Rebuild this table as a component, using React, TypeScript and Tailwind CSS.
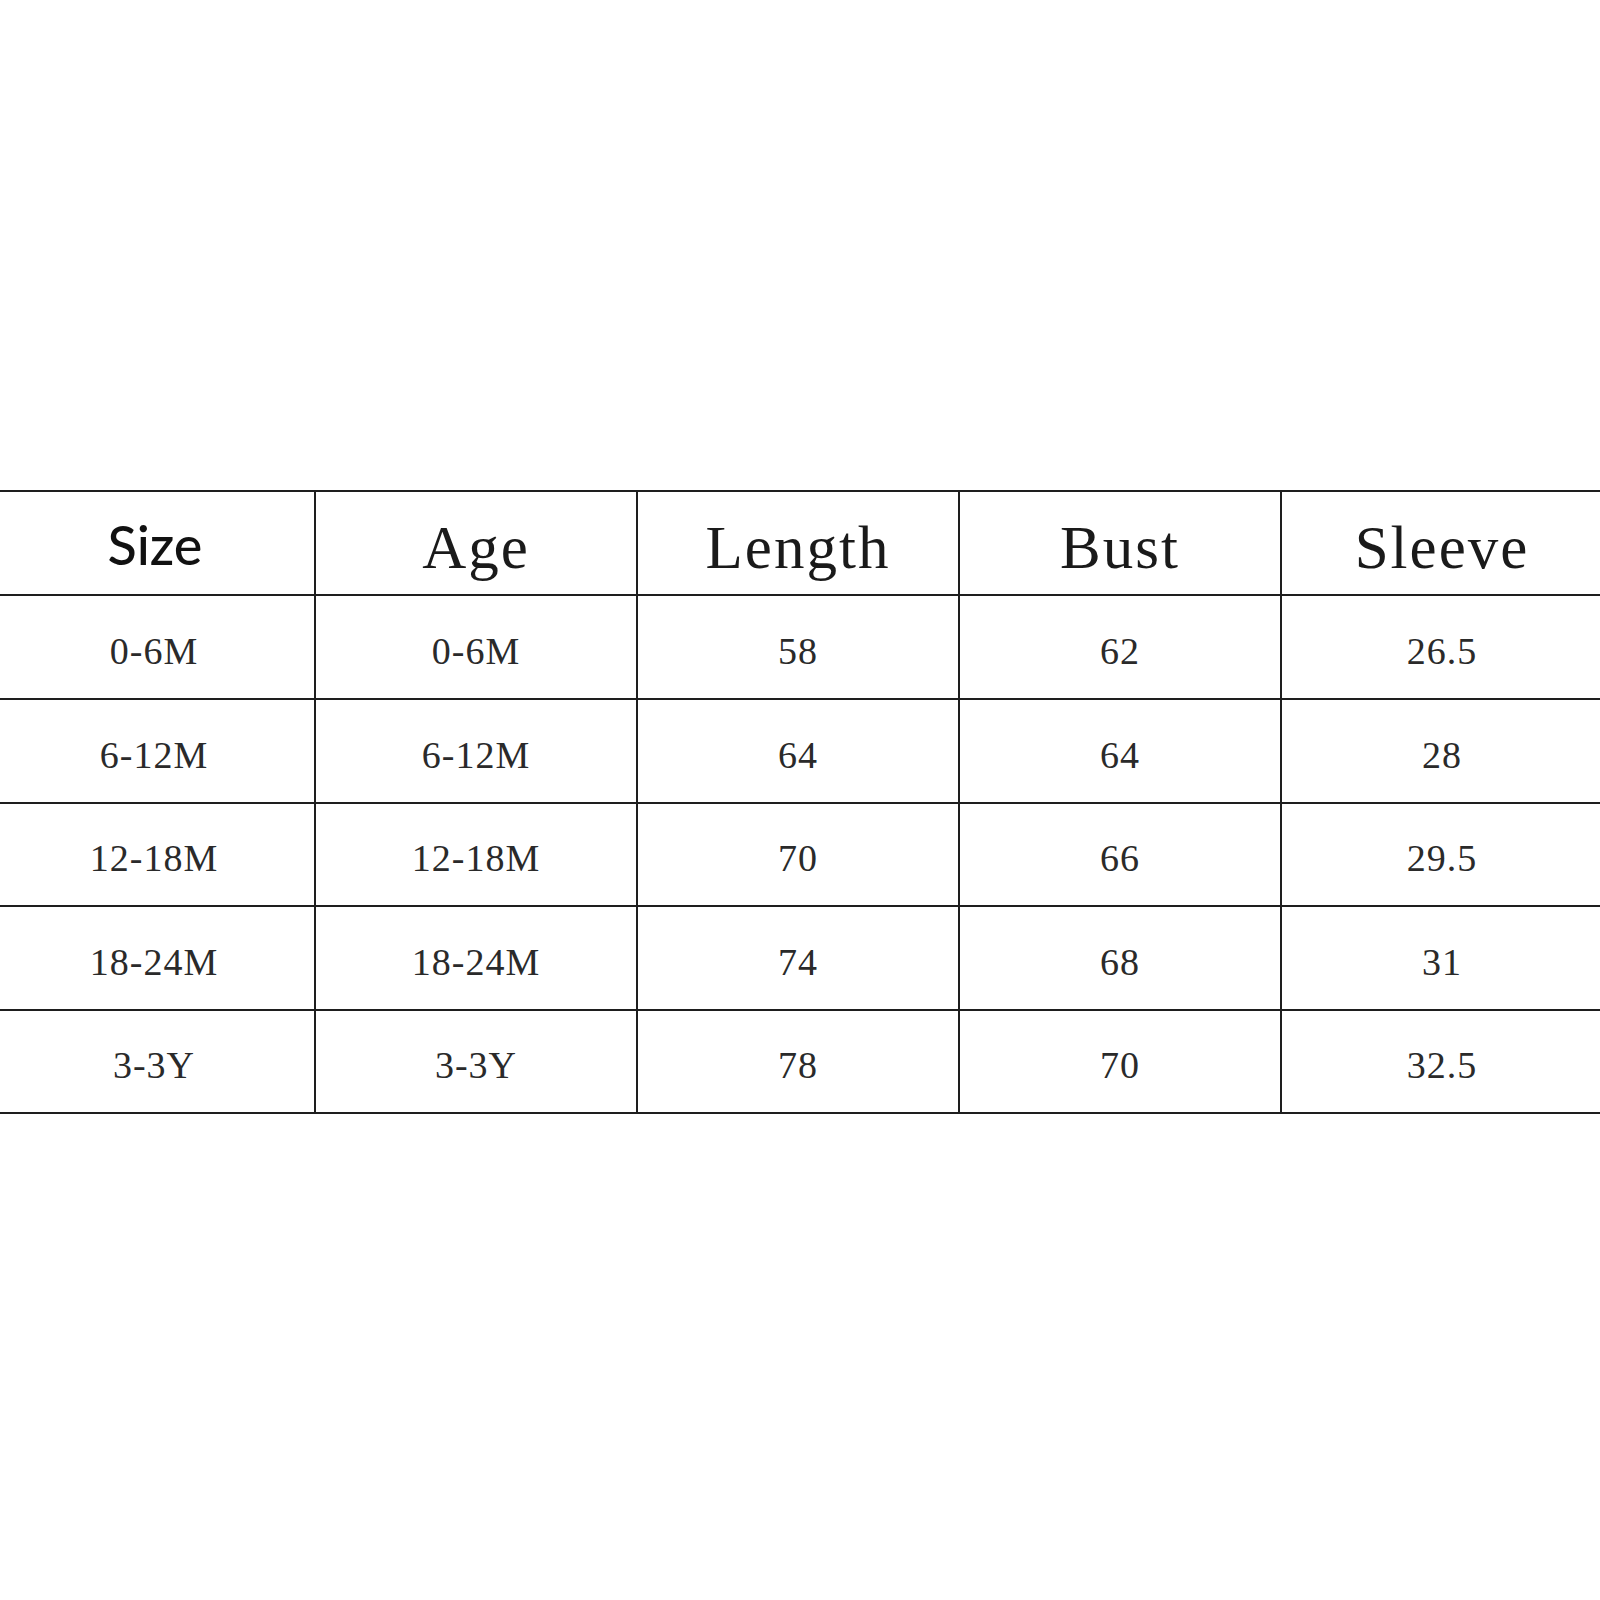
const headers = ["Size", "Age", "Length", "Bust", "Sleeve"];

const rows = [
  { h: "h-[104px]", cells: ["0-6M", "0-6M", "58", "62", "26.5"] },
  { h: "h-[104px]", cells: ["6-12M", "6-12M", "64", "64", "28"] },
  { h: "h-[103px]", cells: ["12-18M", "12-18M", "70", "66", "29.5"] },
  { h: "h-[104px]", cells: ["18-24M", "18-24M", "74", "68", "31"] },
  { h: "h-[103px]", cells: ["3-3Y", "3-3Y", "78", "70", "32.5"] },
];

const App = () => {
  return (
    <div className="w-[1600px] h-[1600px] overflow-hidden bg-white pt-[490px]">
      <div className="ml-[-8px] w-[1612px] border-t-2 border-l-2 border-[#1e1e1e]">
        {/* header row */}
        <div className="grid grid-cols-[repeat(5,322px)]">
          {headers.map((h, i) => (
            <div
              key={h}
              className="h-[104px] flex items-center justify-center border-r-2 border-b-2 border-[#1e1e1e] text-[#111]"
            >
              {i === 0 ? (
                <span className="pl-[2px] pt-[2px] text-[54px] font-[Lato,'Noto_Sans',sans-serif] font-medium">{h}</span>
              ) : (
                <span className="pt-[10px] text-[61px] font-['Liberation_Serif',serif] tracking-[2px] text-[#1a1a1a]">{h}</span>
              )}
            </div>
          ))}
        </div>

        {rows.map((r, ri) => (
          <div key={ri} className="grid grid-cols-[repeat(5,322px)]">
            {r.cells.map((c, ci) => (
              <div
                key={ci}
                className={`${r.h} flex items-center justify-center border-r-2 border-b-2 border-[#1e1e1e]`}
              >
                <span className="pt-[8px] text-[38px] font-['Liberation_Serif',serif] tracking-[1px] text-[#2a2a2a]">{c}</span>
              </div>
            ))}
          </div>
        ))}
      </div>
    </div>
  );
};

export default App;
